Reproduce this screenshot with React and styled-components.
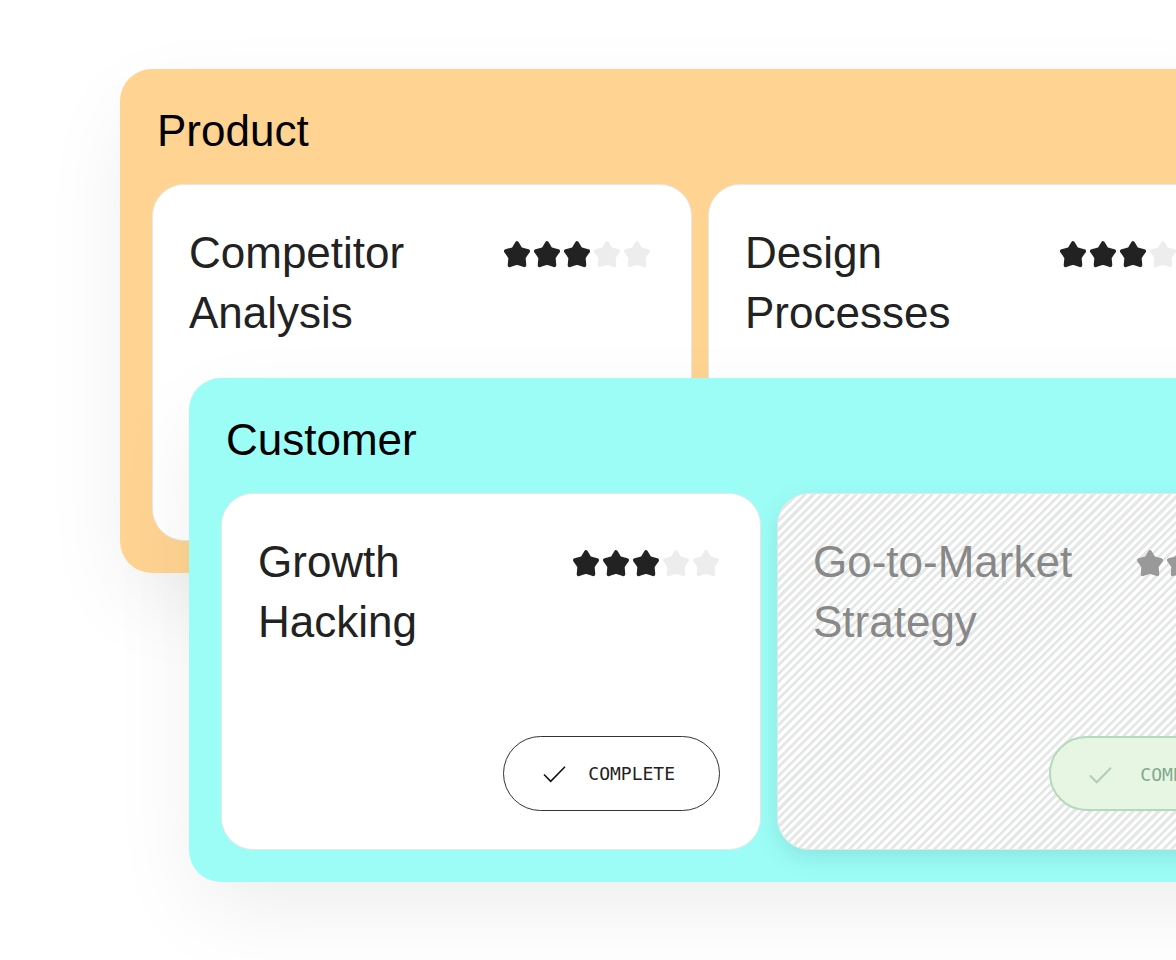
import React from "react";
import styled, { createGlobalStyle, css } from "styled-components";

const GlobalStyle = createGlobalStyle`
  *, *::before, *::after { box-sizing: border-box; }
  body {
    margin: 0;
    background: #fff;
    color: #222;
    font-family: "Liberation Sans", Arial, sans-serif;
    overflow-x: hidden;
  }
`;

const Page = styled.main`
  min-height: 100vh;
  padding: 69px 0 78px 120px;
  overflow: hidden;
`;

const Panel = styled.section`
  width: max-content;
  min-width: 100%;
  padding: 32px;
  border-radius: 32px;
  background: ${({ $color }) => $color};
  box-shadow: 0 32px 90px -10px rgba(0, 0, 0, 0.08);
  ${({ $overlap }) =>
    $overlap &&
    css`
      position: relative;
      margin: -195px 0 0 69px;
    `}
`;

const PanelTitle = styled.h2`
  margin: 0 0 23px;
  padding: 0 5px;
  color: #000;
  font-size: 44px;
  font-weight: 400;
  line-height: 60px;
`;

const CardRow = styled.div`
  display: flex;
  gap: 16px;
`;

const Card = styled.article`
  display: flex;
  flex: none;
  flex-direction: column;
  justify-content: space-between;
  width: ${({ $locked }) => ($locked ? "548px" : "540px")};
  min-height: 357px;
  padding: 38px 40px 38px 36px;
  border: 1px solid #e6e8e8;
  border-radius: 32px;
  background: #fff;
  ${({ $locked }) =>
    $locked &&
    css`
      padding-left: 35px;
      background: repeating-linear-gradient(135deg, #e6e8e8 0 3px, #fff 3px 6px);
      box-shadow: 0 8px 24px rgba(0, 0, 0, 0.1);
    `}
`;

const CardHeader = styled.header`
  display: flex;
  justify-content: space-between;
  align-items: flex-start;
`;

const CardTitle = styled.h3`
  margin: 0;
  color: ${({ $locked }) => ($locked ? "#888" : "#222")};
  font-size: 44px;
  font-weight: 400;
  line-height: 60px;
  white-space: pre;
`;

const Stars = styled.div`
  display: flex;
  gap: 2px;
  padding-top: 17px;
`;

const StarIcon = styled.svg`
  width: 28px;
  height: 28px;
  color: ${({ $on, $locked }) => ($on ? ($locked ? "#999" : "#222") : "#ededed")};
  fill: currentColor;
  stroke: currentColor;
  stroke-width: 4;
  stroke-linejoin: round;
`;

const CompleteButton = styled.button`
  display: flex;
  align-items: center;
  align-self: flex-end;
  gap: 20px;
  height: 75px;
  padding: 0 44px 0 38px;
  border: 1px solid #333;
  border-radius: 38px;
  background: #fff;
  color: #222;
  font-family: "DejaVu Sans Mono", "Liberation Mono", monospace;
  font-size: 18px;
  line-height: 24px;
  cursor: pointer;

  &:disabled {
    gap: 26px;
    padding: 2px 55px 0 37px;
    border: 2px solid #b4dabd;
    background: #e7f6e3;
    color: #80aa8c;
    cursor: default;
  }
`;

const CheckIcon = styled.svg`
  width: 26px;
  height: 24px;
  fill: none;
  stroke: ${({ $locked }) => ($locked ? "#afcfb5" : "#111")};
  stroke-width: ${({ $locked }) => ($locked ? 2 : 1.6)};
`;

const STAR_PATH =
  "M14 3.2Q16 6.5 17.6 9.2Q21 10.2 25 11.2Q22.5 14.5 20.6 17.6Q20.9 21 21.3 25.2Q17.5 23.8 14 22.8Q10.5 23.8 6.7 25.2Q7.1 21 7.4 17.6Q5.5 14.5 3 11.2Q7 10.2 10.4 9.2Q12 6.5 14 3.2Z";

function Rating({ value, locked }) {
  return (
    <Stars role="img" aria-label={`${value} of 5 stars`}>
      {[1, 2, 3, 4, 5].map((n) => (
        <StarIcon key={n} viewBox="0 0 28 28" $on={n <= value} $locked={locked}>
          <path d={STAR_PATH} />
        </StarIcon>
      ))}
    </Stars>
  );
}

function SkillCard({ title, rating, locked }) {
  return (
    <Card $locked={locked}>
      <CardHeader>
        <CardTitle $locked={locked}>{title}</CardTitle>
        <Rating value={rating} locked={locked} />
      </CardHeader>
      <CompleteButton type="button" disabled={locked}>
        <CheckIcon viewBox="0 0 26 24" $locked={locked} aria-hidden="true">
          <path d="M2 12.5L8.7 19.3L23 4.7" />
        </CheckIcon>
        COMPLETE
      </CompleteButton>
    </Card>
  );
}

export default function App() {
  return (
    <>
      <GlobalStyle />
      <Page>
        <Panel $color="#ffd492">
          <PanelTitle>Product</PanelTitle>
          <CardRow>
            <SkillCard title={"Competitor\nAnalysis"} rating={3} />
            <SkillCard title={"Design\nProcesses"} rating={3} />
          </CardRow>
        </Panel>
        <Panel $color="#9cfdf7" $overlap>
          <PanelTitle>Customer</PanelTitle>
          <CardRow>
            <SkillCard title={"Growth\nHacking"} rating={3} />
            <SkillCard title={"Go-to-Market\nStrategy"} rating={3} locked />
          </CardRow>
        </Panel>
      </Page>
    </>
  );
}
